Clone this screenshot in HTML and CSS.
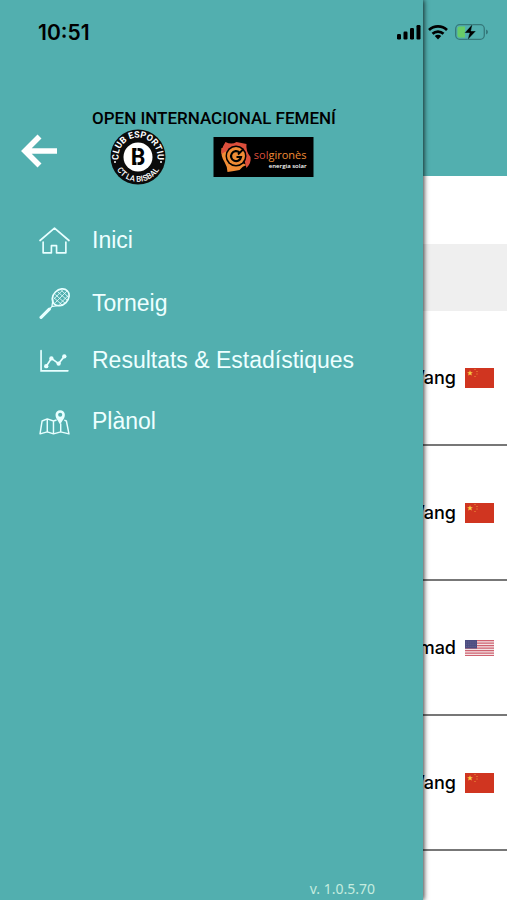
FILE: index.html
```
<!DOCTYPE html>
<html lang="ca">
<head>
    <meta charset="UTF-8">
    <meta name="viewport" content="width=device-width, initial-scale=1">
    <title>Open Internacional Femení</title>
    <link rel="stylesheet" href="styles.css">
</head>
<body>
<main id="page">
    <div class="page-header"></div>
    <div class="page-tabs"></div>
    <div class="page-round"></div>
    <ul class="matches">
        <li>
            <span class="player">Wang</span>
            <svg class="flag" viewBox="0 0 29 20"><use href="#flag-cn"/></svg>
        </li>
        <li>
            <span class="player">Wang</span>
            <svg class="flag" viewBox="0 0 29 20"><use href="#flag-cn"/></svg>
        </li>
        <li>
            <span class="player">Ahmad</span>
            <svg class="flag flag-us" viewBox="0 0 29 16">
                <rect width="29" height="16" fill="#f3e3e4"/>
                <path d="M0 .6h29M0 3.1h29M0 5.6h29M0 8.1h29M0 10.6h29M0 13.1h29M0 15.5h29" stroke="#cf6270" stroke-width="1.2"/>
                <rect width="12" height="8.5" fill="#4c4c80"/>
                <path d="M1 2h10M1 4.2h10M1 6.4h10" stroke="#8585aa" stroke-width=".6" stroke-dasharray=".7 1.2"/>
            </svg>
        </li>
        <li>
            <span class="player">Wang</span>
            <svg class="flag" viewBox="0 0 29 20"><use href="#flag-cn"/></svg>
        </li>
    </ul>
</main>

<nav id="drawer">
    <div class="drawer-top">
        <button class="back" type="button" aria-label="Enrere">
            <svg width="38" height="34" viewBox="0 0 38 34" fill="none" stroke="#fff" stroke-width="5.6">
                <path d="M19.5 2.5 5 17l14.500 14.500M4 17h33"/>
            </svg>
        </button>
        <div class="brand">
            <h1>OPEN INTERNACIONAL FEMENÍ</h1>
            <div class="logos">
                <svg class="club" viewBox="0 0 56 56">
                    <defs>
                        <path id="arc-top" d="M10.700 37A19.500 19.500 0 1 1 45.300 37"/>
                        <path id="arc-bottom" d="M3.300 28A24.700 24.700 0 0 0 52.700 28"/>
                    </defs>
                    <circle cx="28" cy="28" r="27.500" fill="#0b0b0b"/>
                    <circle cx="28" cy="28" r="14.500" fill="#fff"/>
                    <text class="ring"><textPath href="#arc-top" startOffset="50%" text-anchor="middle">CLUB ESPORTIU</textPath></text>
                    <text class="ring ring-low"><textPath href="#arc-bottom" startOffset="50%" text-anchor="middle">CT LA BISBAL</textPath></text>
                    <circle cx="5" cy="33" r="1" fill="#fff"/>
                    <circle cx="51" cy="33" r="1" fill="#fff"/>
                    <text class="club-letter" x="28" y="36" text-anchor="middle">B</text>
                    <path d="M27 18v4M27 33v4" stroke="#fff" stroke-width="1"/>
                </svg>
                <svg class="sponsor" viewBox="0 0 100 40">
                    <rect width="100" height="40" fill="#000"/>
                    <path d="M8 11Q7 19 11 25Q14 30 14 35Q21 34 26 33Q29 29 33 28L27 25L15 12Z" fill="#f08c35"/>
                    <path d="M12 5Q18 8 23 5L33 7Q32 14 37 20Q38 26 33 31L30 20L20 10L8 17Q7 13 12 5Z" fill="#dc4f3c"/>
                    <circle cx="22.500" cy="19" r="10.500" fill="#000"/>
                    <circle cx="22.500" cy="19" r="9" fill="#f08c35"/>
                    <path d="M26 15.500A5 5 0 1 0 27.500 20H23" fill="none" stroke="#000" stroke-width="2.200"/>
                    <path d="M24.500 17.500l5-5" stroke="#000" stroke-width="1.800"/>
                    <text class="sponsor-name" x="93" y="22" text-anchor="end"><tspan fill="#dc4f3c">sol</tspan><tspan fill="#f08c35">gironès</tspan></text>
                    <text class="sponsor-sub" x="93" y="31" text-anchor="end">energia solar</text>
                </svg>
            </div>
        </div>
    </div>

    <ul class="menu">
        <li class="home">
            <a href="#inici">
                <svg viewBox="0 0 30 30" fill="none" stroke="#e8ffff" stroke-width="1.600" stroke-linejoin="round" stroke-linecap="round">
                    <path d="M1 15 15 3l14 12M4 16.500V27h8v-7h5v7h9V16.500"/>
                </svg>
                <span>Inici</span>
            </a>
        </li>
        <li class="tournament">
            <a href="#torneig">
                <svg viewBox="0 0 30 30" fill="none" stroke="#e8ffff" stroke-linecap="round">
                    <ellipse cx="21" cy="9" rx="9" ry="7.200" transform="rotate(-45 21 9)" stroke-width="1.600"/>
                    <path d="M14.500 9.500l8 7M16 6.500l9 8M18.500 4l9 8M22 2.500l6 6M16 14 27 3M14.500 10.500l8-8M20 15.500l8-8" stroke-width=".8"/>
                    <path d="M13.500 11.500 12.500 18l7-1.200M12.500 18 9 21.500" stroke-width="1.200"/>
                    <path d="M10 20.500 2 28.500" stroke-width="3"/>
                </svg>
                <span>Torneig</span>
            </a>
        </li>
        <li class="results">
            <a href="#resultats">
                <svg viewBox="0 0 30 30" fill="none" stroke="#e8ffff" stroke-width="1.600" stroke-linecap="round">
                    <path d="M2 5.500V25h26"/>
                    <path d="M7 20.500l5-7.500 7 5 5.500-7"/>
                    <g fill="#e8ffff" stroke="none">
                        <circle cx="7" cy="20.500" r="2.100"/>
                        <circle cx="12" cy="13" r="2.100"/>
                        <circle cx="19" cy="18" r="2.100"/>
                        <circle cx="24.500" cy="11" r="2.100"/>
                    </g>
                </svg>
                <span>Resultats &amp; Estadístiques</span>
            </a>
        </li>
        <li class="map">
            <a href="#planol">
                <svg viewBox="0 0 30 30" fill="none" stroke="#e8ffff" stroke-width="1.400" stroke-linejoin="round">
                    <path d="M17 13.500l-3 1-6-2-5 2L1 27l7-2 6 2 7-2 8 2-2.500-12.500-2-.8M8 12.500V25M14 14.500V27M21 17v8"/>
                    <path d="M20.500 18c-2.500-4.500-4.500-6-4.500-9.500a4.500 4.500 0 0 1 9 0c0 3.500-2 5-4.500 9.500z" fill="#e8ffff" stroke="none"/>
                    <circle cx="20.500" cy="8.500" r="2" fill="#52afaf" stroke="none"/>
                </svg>
                <span>Plànol</span>
            </a>
        </li>
    </ul>
    <p class="version">v. 1.0.5.70</p>
</nav>

<header id="status">
    <time>10:51</time>
    <div class="status-icons">
        <svg width="24" height="16" viewBox="0 0 24 16">
            <rect x="0" y="10" width="4" height="5.500" rx="1.200"/>
            <rect x="6.500" y="7.500" width="4" height="8" rx="1.200"/>
            <rect x="13" y="4" width="4" height="11.500" rx="1.200"/>
            <rect x="19.500" y="1" width="4" height="14.500" rx="1.200"/>
        </svg>
        <svg width="20" height="16" viewBox="0 0 20 16" fill="none" stroke="#000" stroke-width="2.700">
            <path d="M1 6a13 13 0 0 1 18 0M4.500 9.800a8 8 0 0 1 11 0"/>
            <path d="M6.800 12a4.600 4.600 0 0 1 6.400 0L10 15.500z" fill="#000" stroke="none"/>
        </svg>
        <svg width="34" height="16" viewBox="0 0 34 16">
            <rect x=".7" y=".7" width="28.600" height="14.600" rx="4" fill="none" stroke="#35787a" stroke-width="1.300"/>
            <path d="M4.500 2.500H10v11H4.500a2 2 0 0 1-2-2v-7a2 2 0 0 1 2-2z" fill="#69cc67"/>
            <path d="M31 5.500q2 .8 2 2.500t-2 2.500z" fill="#35787a"/>
            <path d="M17.500 0 9.500 9h5l-2 7L21 7h-5z" stroke="#52afaf" stroke-width=".4"/>
        </svg>
    </div>
</header>

<svg width="0" height="0" class="defs">
    <symbol id="flag-cn" viewBox="0 0 29 20">
        <rect width="29" height="20" fill="#d03520"/>
        <path d="M5 2.200l.8 2h2.100l-1.700 1.300.7 2.100L5 6.400 3.100 7.600l.7-2.100L2.100 4.200h2.100z" fill="#f8cf45"/>
        <path d="M9.500 1.500h1M11.500 3.500h1M11.500 6h1M9.500 8.500h1" stroke="#ee9a38"/>
    </symbol>
</svg>
</body>
</html>
```

FILE: styles.css
```
* {
    margin: 0;
    padding: 0;
    box-sizing: border-box;
}

ul {
    list-style: none;
}

svg {
    display: block;
    flex: none;
}

body {
    position: relative;
    min-height: 100vh;
    overflow: hidden;
    background-color: #fff;
    font-family: Inter, "Liberation Sans", sans-serif;
}

.defs {
    position: absolute;
}

/* status bar, over everything */
#status {
    position: absolute;
    top: 0;
    left: 0;
    right: 0;
    height: 64px;
    padding: 0 18px 0 38px;
    display: flex;
    align-items: center;
    justify-content: space-between;
}

#status time {
    font-size: 21px;
    font-weight: 600;
}

.status-icons {
    display: flex;
    gap: 7px;
}

/* page behind the drawer */
.page-header {
    height: 176px;
    background-color: #52afaf;
}

.page-tabs {
    height: 68px;
}

.page-round {
    height: 67px;
    background-color: #efefef;
}

.matches li {
    height: 135px;
    padding-right: 13px;
    display: flex;
    align-items: center;
    justify-content: flex-end;
    gap: 9px;
    border-bottom: 2px solid #777;
}

.player {
    font-size: 18px;
    font-weight: 500;
}

.flag {
    width: 29px;
    height: 20px;
}

.flag-us {
    height: 16px;
}

/* drawer */
#drawer {
    position: absolute;
    top: 0;
    bottom: 0;
    left: 0;
    right: 84px;
    display: flex;
    flex-direction: column;
    background-color: #52afaf;
    box-shadow: 1px 0 5px rgba(0, 0, 0, 0.8);
}

.drawer-top {
    display: flex;
    padding: 107px 20px 0;
}

.back {
    width: 72px;
    height: 88px;
    border: 0;
    background: none;
    cursor: pointer;
}

h1 {
    font-family: Roboto, "Liberation Sans", sans-serif;
    font-size: 17px;
    font-weight: 500;
    line-height: 22px;
    white-space: nowrap;
}

.logos {
    display: flex;
    align-items: center;
    gap: 47px;
    padding-left: 18px;
}

.club {
    width: 56px;
    height: 56px;
}

.ring {
    font-family: Roboto, sans-serif;
    font-size: 9px;
    font-weight: 700;
    fill: #fff;
}

.ring-low {
    font-size: 8px;
    font-weight: 500;
}

.club-letter {
    font-family: Roboto, sans-serif;
    font-size: 23px;
    font-weight: 700;
}

.sponsor {
    width: 101px;
    height: 40px;
}

.sponsor-name {
    font-family: "Open Sans", sans-serif;
    font-size: 11px;
}

.sponsor-sub {
    font-family: "Open Sans", sans-serif;
    font-size: 6px;
    font-weight: 600;
    fill: #fff;
}

.menu {
    padding: 13px 20px 0 39px;
}

.menu a {
    height: 100%;
    display: flex;
    align-items: center;
    gap: 22px;
    color: #eff;
    font-family: "Liberation Sans", Arial, sans-serif;
    font-size: 23px;
    text-decoration: none;
    white-space: nowrap;
}

.menu svg {
    width: 31px;
    height: 31px;
}

.home {
    height: 64px;
}

.tournament {
    height: 62px;
}

.results {
    height: 52px;
}

.map {
    height: 70px;
}

.version {
    margin-top: auto;
    padding: 0 48px 3px 0;
    color: #c5ecdf;
    font-family: "Noto Sans", sans-serif;
    font-size: 14px;
    line-height: 16px;
    text-align: right;
}
```
